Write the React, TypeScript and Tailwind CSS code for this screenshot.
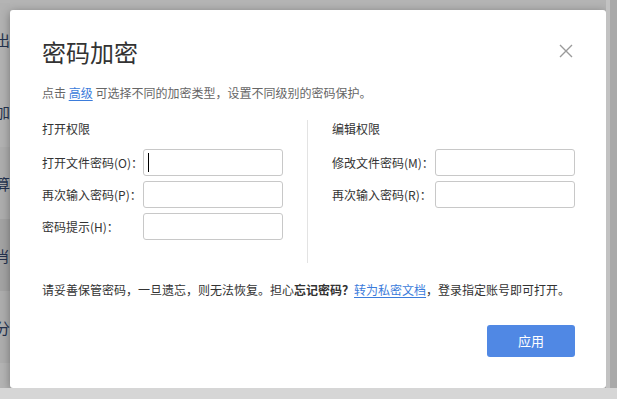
export default function App() {
  // 背景里被弹窗挡住的侧栏文字
  const sideRows = [
    { ch: '出', bg: 'bg-[#b2b2b2]' },
    { ch: '加', bg: 'bg-[#b2b2b2]' },
    { ch: '算', bg: 'bg-[#adadad]' },
    { ch: '肖', bg: 'bg-[#a3a3a3]' },
    { ch: '分', bg: 'bg-[#adadad]' },
  ];

  return (
    <div className="w-[617px] h-[399px] overflow-hidden flex flex-col bg-[#b4b4b4] font-['Noto_Sans_CJK_SC',sans-serif]">
      <div className="flex h-[388px]">
        {/* 左侧背景条 */}
        <div className="w-[10px] flex flex-col pt-[3px] overflow-hidden">
          {sideRows.map((r) => (
            <div key={r.ch} className={`h-[72px] flex items-center overflow-hidden ${r.bg}`}>
              <span className="-ml-[5px] text-[15px] leading-none text-[#24324f]">{r.ch}</span>
            </div>
          ))}
        </div>

        {/* 弹窗 */}
        <div className="mt-[10px] w-[596px] h-[378px] bg-white rounded-[3px] shadow-[0_2px_10px_rgba(0,0,0,0.35)] pt-[26px] pl-[32px] pr-[31px] flex flex-col">
          <div className="flex items-center justify-between h-[32px]">
            <h1 className="text-[24px] leading-[32px] text-[#333]">密码加密</h1>
            <svg width="14" height="14" viewBox="0 0 14 14" className="mr-[2px] -mt-[2px]">
              <path d="M1 1 L13 13 M13 1 L1 13" stroke="#9a9a9a" strokeWidth="1.4" />
            </svg>
          </div>

          <p className="mt-[16px] text-[12px] leading-[18px] text-[#666]">
            点击 <span className="text-[#3b7cdb] underline underline-offset-2">高级</span> 可选择不同的加密类型，设置不同级别的密码保护。
          </p>

          <div className="mt-[18px] h-[143px] flex">
            <div className="w-[241px] flex flex-col">
              <div className="text-[12px] leading-[18px] text-[#333]">打开权限</div>
              <div className="mt-[11px] flex flex-col gap-[5px]">
                <Field label="打开文件密码(O)：" labelW="w-[101px]" caret />
                <Field label="再次输入密码(P)：" labelW="w-[101px]" />
                <Field label="密码提示(H)：" labelW="w-[101px]" />
              </div>
            </div>

            <div className="ml-[24px] w-px bg-[#e3e3e3]" />

            <div className="ml-[24px] flex-1 flex flex-col">
              <div className="text-[12px] leading-[18px] text-[#333]">编辑权限</div>
              <div className="mt-[11px] flex flex-col gap-[5px]">
                <Field label="修改文件密码(M)：" labelW="w-[103px]" />
                <Field label="再次输入密码(R)：" labelW="w-[103px]" />
              </div>
            </div>
          </div>

          <p className="mt-[18px] text-[12px] leading-[18px] text-[#333] whitespace-nowrap">
            请妥善保管密码，一旦遗忘，则无法恢复。担心<span className="font-bold">忘记密码？</span>
            <span className="text-[#3b7cdb] underline underline-offset-2">转为私密文档</span>，登录指定账号即可打开。
          </p>

          <div className="mt-[26px] flex justify-end">
            <button className="w-[88px] h-[32px] rounded-[3px] bg-[#5088e4] text-white text-[13px]">应用</button>
          </div>
        </div>

        <div className="flex-1 flex">
          <div className="w-[4px] bg-[#c2c2c2]" />
          <div className="flex-1 bg-[#a9a9a9]" />
        </div>
      </div>
      <div className="flex-1 bg-[#d6d6d6]" />
    </div>
  );
}

function Field({ label, labelW, caret }: { label: string; labelW: string; caret?: boolean }) {
  return (
    <div className="flex items-center h-[27px]">
      <span className={`${labelW} shrink-0 text-[12px] text-[#333] whitespace-nowrap`}>{label}</span>
      <div className="w-[140px] h-[27px] border border-[#c8c8c8] rounded-[3px] flex items-center pl-[4px]">
        {caret && <span className="w-px h-[19px] bg-black" />}
      </div>
    </div>
  );
}
